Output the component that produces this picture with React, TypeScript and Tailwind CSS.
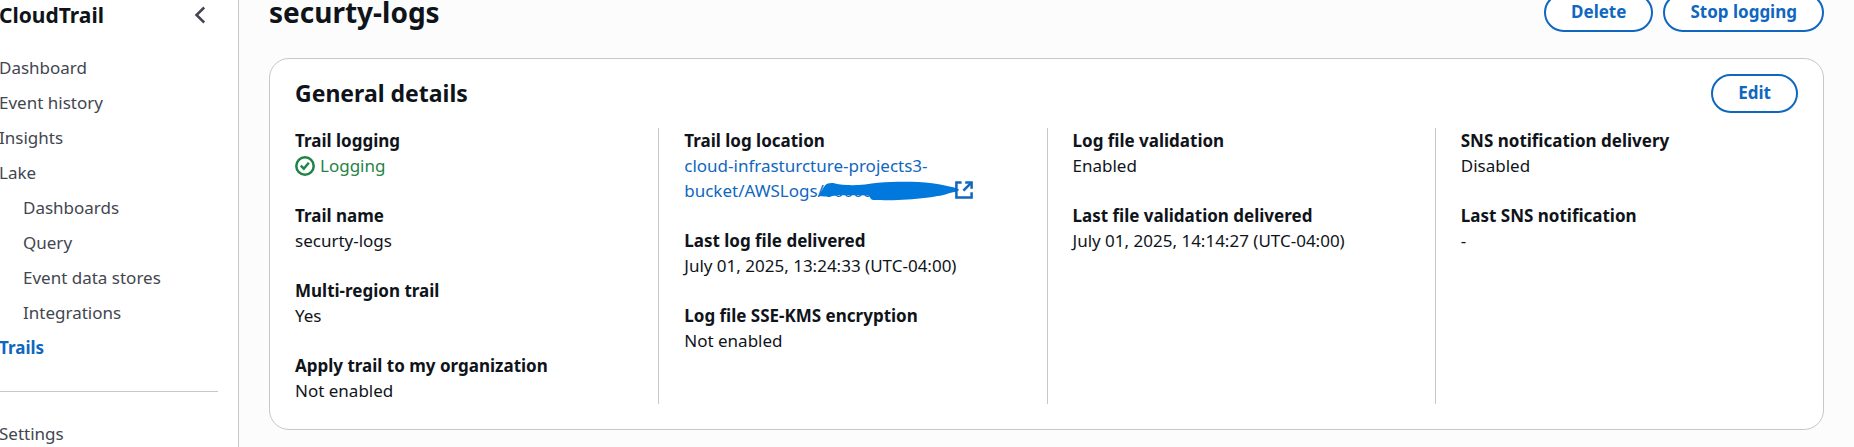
import type { ReactNode } from "react";

type Item = { label: string; value: ReactNode };

function CheckCircle() {
  return (
    <svg viewBox="0 0 20 20" className="h-5 w-5 shrink-0" fill="none" stroke="currentColor" strokeWidth="2.5" aria-hidden="true">
      <circle cx="10" cy="10" r="8.7" />
      <path d="M5.8 9.7 8.8 12.7 13.800 6.800" />
    </svg>
  );
}

function ExternalIcon() {
  return (
    <svg viewBox="0 0 18 18" className="absolute top-[3px] right-0 h-[18px] w-[18px]" fill="none" stroke="#0f67c0" strokeWidth="2.5" aria-hidden="true">
      <path d="M6.6 1.4H1.4V16.6H16.6V11.2" />
      <path d="M10.2 1.4H16.6V7.8" />
      <path d="M16.4 1.6 8.4 9.600" />
    </svg>
  );
}

function Scribble() {
  return (
    <svg viewBox="0 0 142 22" className="absolute top-[2px] left-0 h-[22px] w-[142px]" fill="#0078dc" aria-hidden="true">
      <path d="M0.500 16C3 13 4 9 7 5.500C9 3 14 2.500 17 3.500C25 5.500 36 5.500 47 4.500C56 3 64 2 73 2C82 1.500 92 1.500 100 2C110 2.500 119 3.500 127 5.500C133 7 138 7.500 141 9.500C141 12 134 12 129 14C124 15.500 120 16 117 16.500C106 18.500 92 19.500 80 20C70 20.500 62 20 55 20C51 19 53 16 50 15.500C40 15 30 15.500 22 15C15 16 8 17 0.500 16Z" />
    </svg>
  );
}

const columns: Item[][] = [
  [
    {
      label: "Trail logging",
      value: (
        <span className="flex items-center gap-[5px] text-[#1f8347]">
          <CheckCircle />
          Logging
        </span>
      ),
    },
    { label: "Trail name", value: "securty-logs" },
    { label: "Multi-region trail", value: "Yes" },
    { label: "Apply trail to my organization", value: "Not enabled" },
  ],
  [
    {
      label: "Trail log location",
      value: (
        <a href="#location" className="block text-[#0f67c0]">
          cloud-infrasturcture-projects3-
          <br />
          <span className="flex">
            bucket/AWSLogs/
            <span className="relative -ml-[6px] w-[155px] pl-[6px]">
              00000000000
              <Scribble />
              <ExternalIcon />
            </span>
          </span>
        </a>
      ),
    },
    { label: "Last log file delivered", value: "July 01, 2025, 13:24:33 (UTC-04:00)" },
    { label: "Log file SSE-KMS encryption", value: "Not enabled" },
  ],
  [
    { label: "Log file validation", value: "Enabled" },
    { label: "Last file validation delivered", value: "July 01, 2025, 14:14:27 (UTC-04:00)" },
  ],
  [
    { label: "SNS notification delivery", value: "Disabled" },
    { label: "Last SNS notification", value: "-" },
  ],
];

const nav = [
  { text: "Dashboard" },
  { text: "Event history" },
  { text: "Insights" },
  { text: "Lake", children: ["Dashboards", "Query", "Event data stores", "Integrations"] },
  { text: "Trails", active: true },
];

function Button({ children }: { children: ReactNode }) {
  return (
    <button
      type="button"
      className="flex h-[39px] items-start rounded-full border-2 border-[#0f67c0] bg-white px-[25px] pt-[4px] leading-[25px] font-bold whitespace-nowrap text-[#0f67c0]"
    >
      {children}
    </button>
  );
}

export default function App() {
  return (
    <div className="flex h-screen overflow-hidden bg-[#fcfcfd] font-['Noto_Sans',sans-serif] text-[17px] leading-[25px] text-[#0f141a]">
      <aside className="w-[239px] shrink-0 border-r border-[#c6c6cd] bg-white text-[#424650]">
        <div className="flex h-[30px] items-center justify-between pr-8">
          <h2 className="-ml-px text-[21px] font-bold text-[#0f141a]">CloudTrail</h2>
          <button type="button" aria-label="Close navigation">
            <svg viewBox="0 0 12 18" className="h-[18px] w-3" fill="none" stroke="#424650" strokeWidth="2.5" aria-hidden="true">
              <path d="M10.200 1.500 2.500 9l7.700 7.500" />
            </svg>
          </button>
        </div>
        <nav className="-ml-px pt-[25px]">
          <ul className="flex flex-col gap-2.5">
            {nav.map((n) => (
              <li key={n.text}>
                <a href={"#" + n.text} className={n.active ? "block font-bold text-[#0f67c0]" : "block"}>
                  {n.text}
                </a>
                {n.children && (
                  <ul className="flex flex-col gap-2.5 pt-2.5 pl-6">
                    {n.children.map((c) => (
                      <li key={c}>
                        <a href={"#" + c} className="block">{c}</a>
                      </li>
                    ))}
                  </ul>
                )}
              </li>
            ))}
          </ul>
          <hr className="mt-[31px] mr-5 mb-[29px] border-[#c6c6cd]" />
          <a href="#settings" className="block">Settings</a>
        </nav>
      </aside>
      <main className="-mt-[7px] min-w-0 flex-1 px-[30px]">
        <header className="flex items-center justify-between">
          <h1 className="text-[28px] font-bold">securty-logs</h1>
          <div className="flex gap-2.5">
            <Button>Delete</Button>
            <Button>Stop logging</Button>
          </div>
        </header>
        <section className="mt-[26px] rounded-[20px] border border-[#c6c6cd] bg-white pb-[25px]">
          <div className="flex items-center justify-between px-[25px] pt-[15px] pb-4">
            <h2 className="text-[23px] font-bold">General details</h2>
            <Button>Edit</Button>
          </div>
          <div className="grid grid-cols-4">
            {columns.map((items, i) => (
              <dl key={i} className={"-mt-px flex flex-col gap-[25px] px-[25px] pb-px" + (i > 0 ? " border-l border-[#c6c6cd]" : "")}>
                {items.map((it) => (
                  <div key={it.label}>
                    <dt className="font-bold">{it.label}</dt>
                    <dd>{it.value}</dd>
                  </div>
                ))}
              </dl>
            ))}
          </div>
        </section>
      </main>
    </div>
  );
}
